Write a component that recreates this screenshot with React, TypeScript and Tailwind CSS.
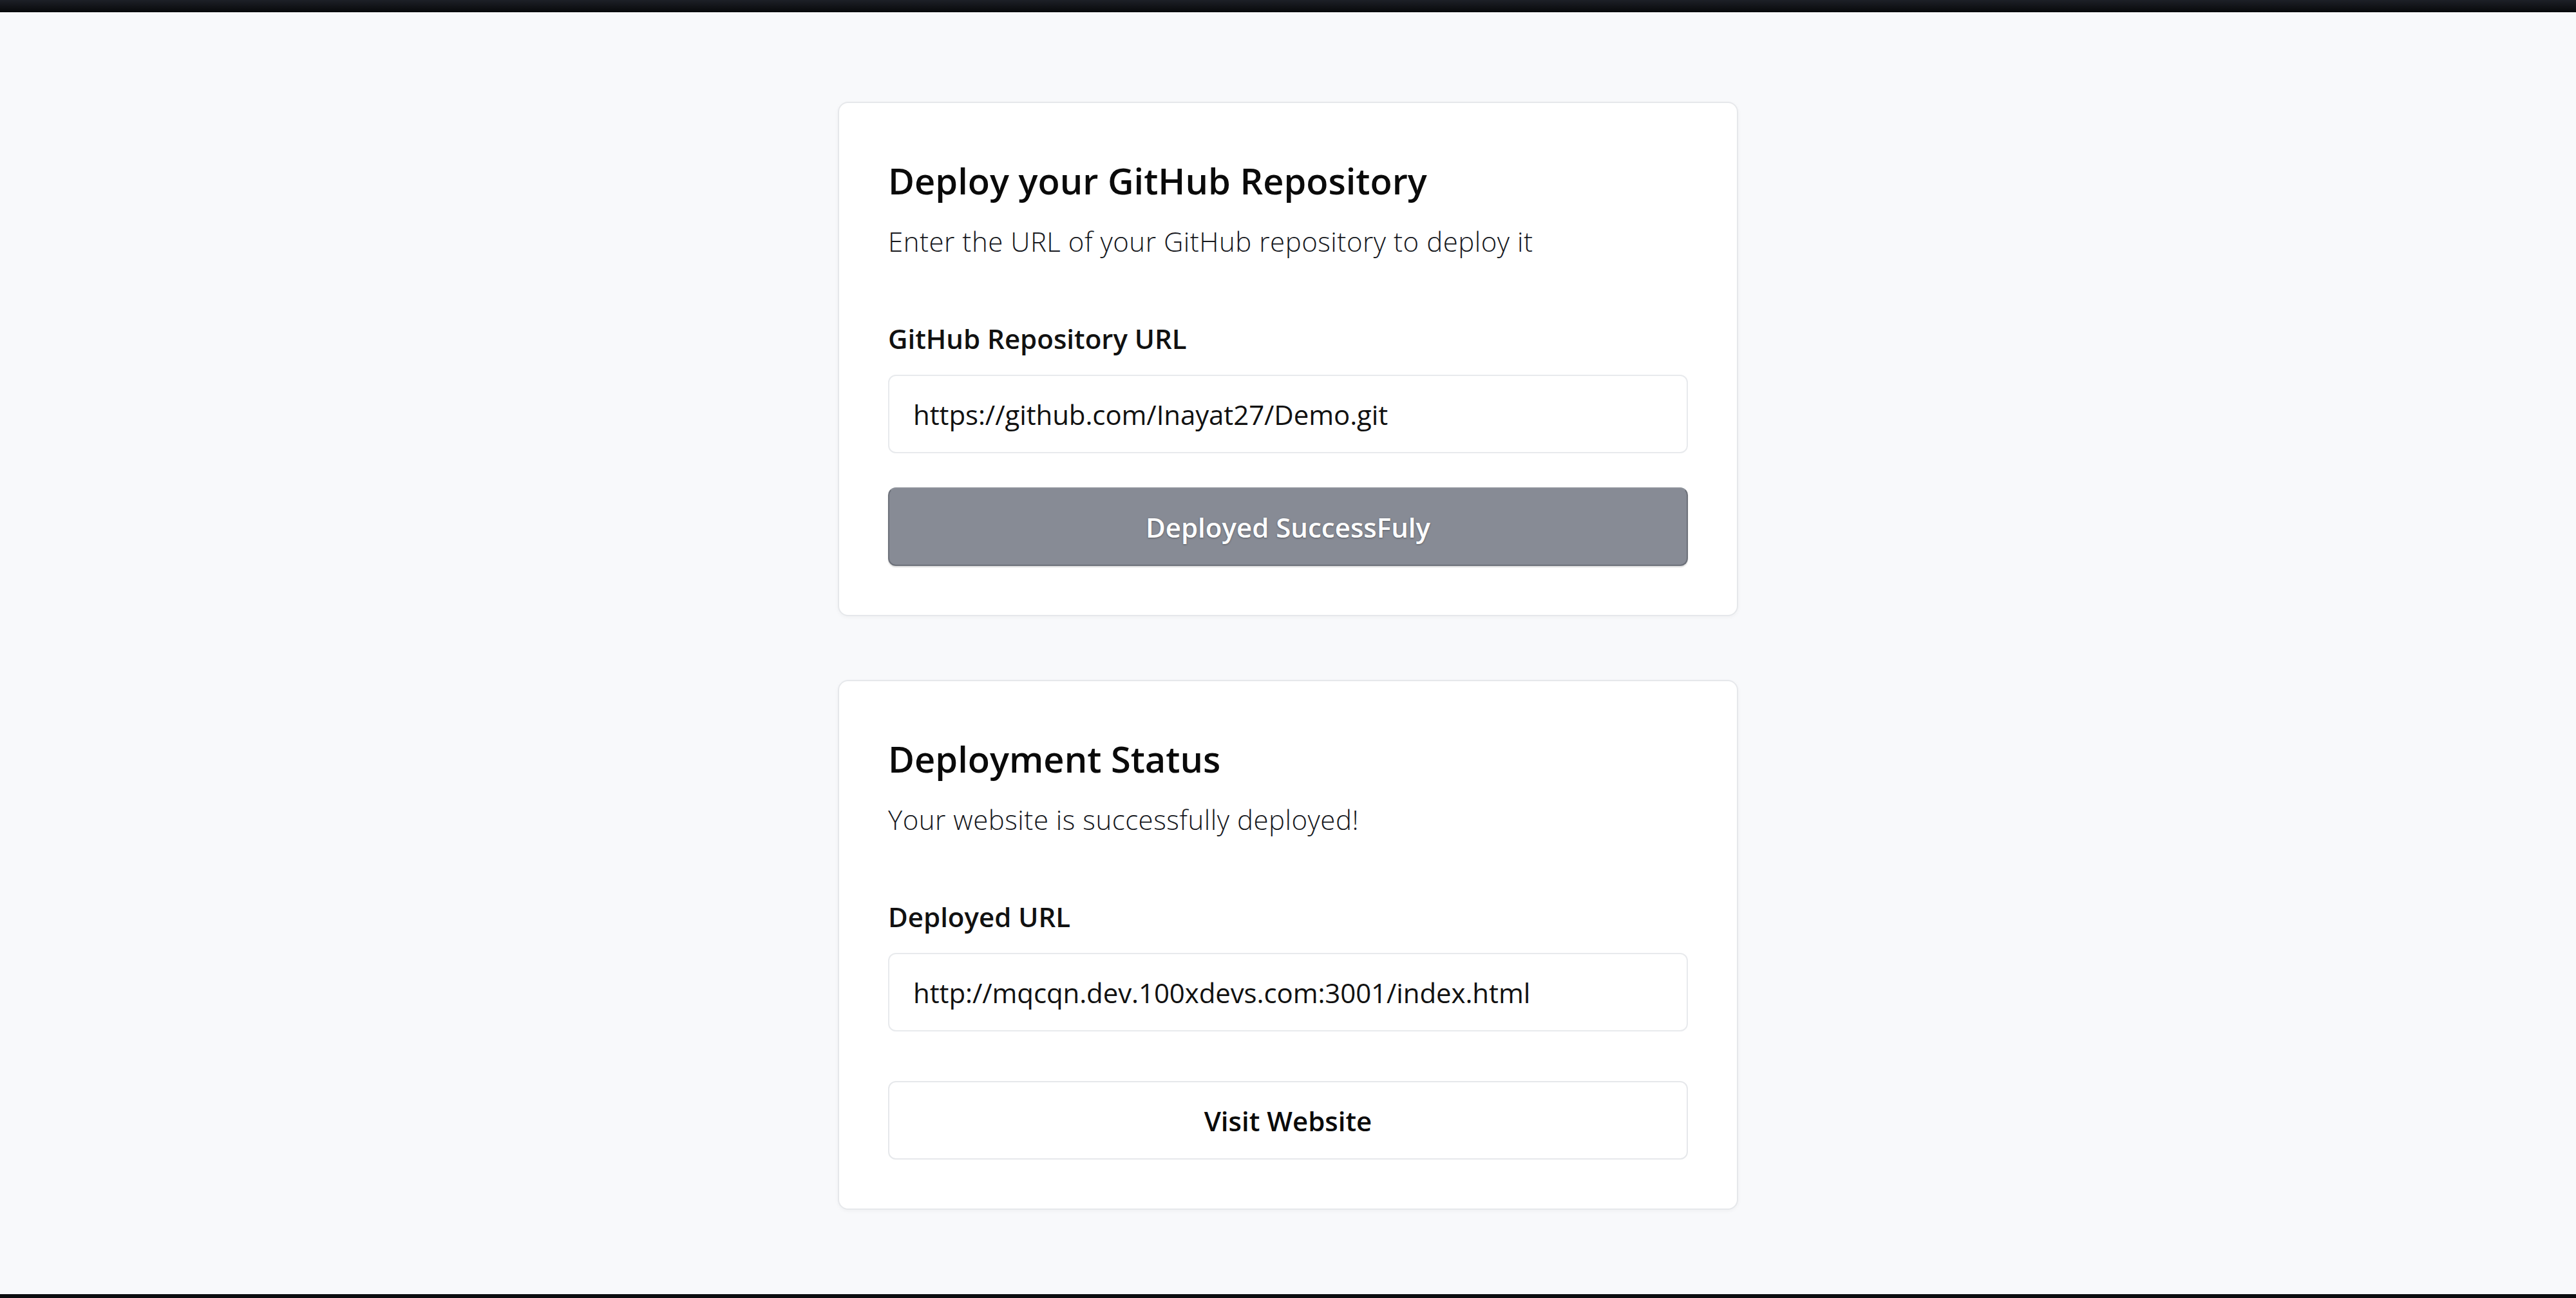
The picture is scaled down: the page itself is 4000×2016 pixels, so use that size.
const cards = [
  {
    title: "Deploy your GitHub Repository",
    description: "Enter the URL of your GitHub repository to deploy it",
    label: "GitHub Repository URL",
    value: "https://github.com/Inayat27/Demo.git",
  },
  {
    title: "Deployment Status",
    description: "Your website is successfully deployed!",
    label: "Deployed URL",
    value: "http://mqcqn.dev.100xdevs.com:3001/index.html",
  },
];

function Field({ label, value }: { label: string; value: string }) {
  return (
    <>
      <label className="mt-[91px] block text-[42px] leading-[60px] font-semibold text-[#111]">
        {label}
      </label>
      <div className="mt-[26px] flex h-[122px] items-center rounded-[12px] border-2 border-[#e8eaed] bg-white pl-[37px] text-[42px] tracking-[-0.1px] text-[#111]">
        {value}
      </div>
    </>
  );
}

export default function App() {
  const [repo, status] = cards;

  return (
    <div className="flex h-[2016px] flex-col font-['Open_Sans',sans-serif]">
      <div className="h-[19px] bg-gradient-to-b from-[#1d2027] to-[#08090b]" />

      <main className="flex flex-1 flex-col items-center gap-[99px] bg-[#f8f9fb] pt-[139px]">
        <section className="w-[1398px] rounded-[16px] border-2 border-[#e6e8eb] bg-white px-[76px] pt-[88px] pb-[76px] shadow-[0_2px_6px_rgba(0,0,0,0.04)]">
          <h1 className="text-[56px] leading-[64px] font-semibold text-[#0a0a0a]">{repo.title}</h1>
          <p className="mt-[33px] text-[42px] leading-[60px] font-light tracking-[0.5px] text-[#16181d]">
            {repo.description}
          </p>
          <Field label={repo.label} value={repo.value} />
          <button className="mt-[53px] flex h-[122px] w-full items-center justify-center rounded-[12px] border-2 border-[#6c7079] border-t-[#8d919a] bg-[#878b95] text-[42px] font-semibold text-white shadow-[0_2px_2px_rgba(0,0,0,0.15)] [text-shadow:0_1px_3px_rgba(0,0,0,0.35)]">
            Deployed SuccessFuly
          </button>
        </section>

        <section className="w-[1398px] rounded-[16px] border-2 border-[#e6e8eb] bg-white px-[76px] pt-[88px] pb-[76px] shadow-[0_2px_6px_rgba(0,0,0,0.04)]">
          <h2 className="text-[56px] leading-[64px] font-semibold text-[#0a0a0a]">{status.title}</h2>
          <p className="mt-[33px] text-[42px] leading-[60px] font-light tracking-[0.5px] text-[#16181d]">
            {status.description}
          </p>
          <Field label={status.label} value={status.value} />
          <button className="mt-[77px] flex h-[122px] w-full items-center justify-center rounded-[12px] border-2 border-[#e6e8eb] bg-white text-[42px] font-semibold text-[#0a0a0a]">
            Visit Website
          </button>
        </section>
      </main>

      <div className="h-[6px] bg-[#0c0d10]" />
    </div>
  );
}
